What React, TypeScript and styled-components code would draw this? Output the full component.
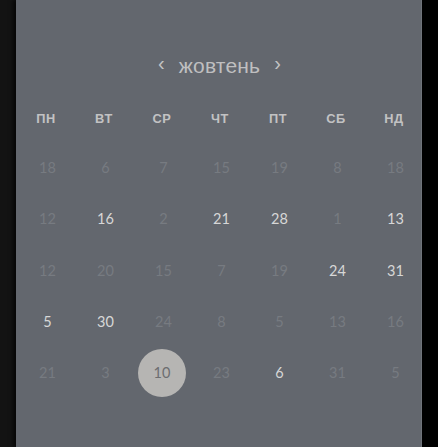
import React from "react";
import styled, { createGlobalStyle } from "styled-components";

const Global = createGlobalStyle`
  html, body { margin: 0; padding: 0; background: #000; }
  body { font-family: "Liberation Sans", Arial, sans-serif; }
`;

const Page = styled.div`
  display: flex;
  width: 438px;
  height: 447px;
  background: #000;
  overflow: hidden;
`;

const LeftStrip = styled.div`
  width: 16px;
  flex: none;
  background: #131313;
`;

const RightStrip = styled.div`
  flex: 1;
  background: #000;
`;

const Panel = styled.div`
  width: 406px;
  flex: none;
  background: #63676e;
  box-shadow: -3px 0 4px rgba(0, 0, 0, 0.7);
  border-right: 1px solid #70747b;
  box-sizing: border-box;
  padding-top: 46px;
  display: flex;
  flex-direction: column;
  position: relative;
`;

const Header = styled.div`
  height: 40px;
  display: flex;
  align-items: center;
  justify-content: center;
  gap: 14px;
  color: #bfbfc0;
  margin-bottom: 8px;
  padding-left: 2px;
`;

const Chevron = styled.span`
  font-size: 20px;
  color: #c4c4c4;
  line-height: 1;
  position: relative;
  top: -3px;
`;

const Month = styled.span`
  font-size: 21px;
  letter-spacing: 0.2px;
`;

const Grid = styled.div`
  display: grid;
  grid-template-columns: repeat(7, 58px);
  grid-template-rows: 48px repeat(5, 51.25px);
  padding-left: 1px;
`;

const WeekDay = styled.div`
  display: flex;
  align-items: center;
  justify-content: center;
  font-weight: 700;
  font-size: 12.8px;
  letter-spacing: 0.6px;
  color: #c2c2c3;
`;

const Day = styled.div<{ $tone: "muted" | "active" | "selected" }>`
  display: flex;
  align-items: center;
  justify-content: center;
  padding-left: ${(p) => (p.$tone === "selected" ? "0" : "3px")};
  font-family: Lato, "Liberation Sans", sans-serif;
  font-size: 14.5px;
  color: ${(p) =>
    p.$tone === "active" ? "#d7d7d7" : p.$tone === "muted" ? "#777b81" : "#6c6d70"};
`;

const Circle = styled.div`
  width: 48px;
  height: 48px;
  border-radius: 50%;
  background: #b6b5b3;
  display: flex;
  align-items: center;
  justify-content: center;
`;

const weekDays = ["пн", "вт", "ср", "чт", "пт", "сб", "нд"];

type Cell = [number, "m" | "a" | "s"];
const rows: Cell[][] = [
  [[18, "m"], [6, "m"], [7, "m"], [15, "m"], [19, "m"], [8, "m"], [18, "m"]],
  [[12, "m"], [16, "a"], [2, "m"], [21, "a"], [28, "a"], [1, "m"], [13, "a"]],
  [[12, "m"], [20, "m"], [15, "m"], [7, "m"], [19, "m"], [24, "a"], [31, "a"]],
  [[5, "a"], [30, "a"], [24, "m"], [8, "m"], [5, "m"], [13, "m"], [16, "m"]],
  [[21, "m"], [3, "m"], [10, "s"], [23, "m"], [6, "a"], [31, "m"], [5, "m"]],
];

export default function App() {
  return (
    <Page>
      <Global />
      <LeftStrip />
      <Panel>
        <Header>
          <Chevron>‹</Chevron>
          <Month>жовтень</Month>
          <Chevron>›</Chevron>
        </Header>
        <Grid>
          {weekDays.map((d) => (
            <WeekDay key={d}>{d.toUpperCase()}</WeekDay>
          ))}
          {rows.flat().map(([n, t], i) => (
            <Day key={i} $tone={t === "a" ? "active" : t === "m" ? "muted" : "selected"}>
              {t === "s" ? <Circle>{n}</Circle> : n}
            </Day>
          ))}
        </Grid>
      </Panel>
      <RightStrip />
    </Page>
  );
}
